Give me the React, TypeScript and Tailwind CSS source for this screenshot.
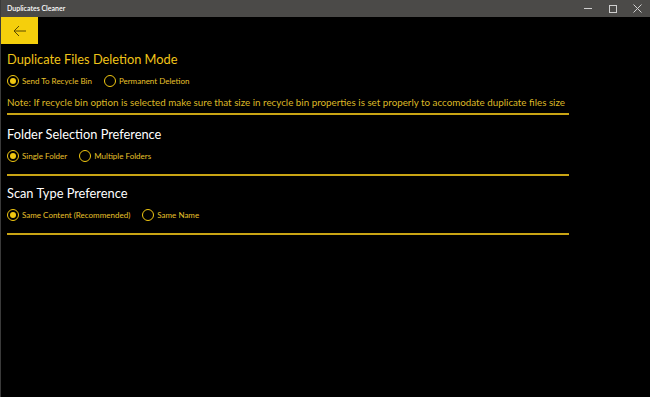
import React from "react";

const Radio = ({ label, checked }: { label: string; checked?: boolean }) => (
  <label className="flex items-center gap-[3px] mr-[12px]">
    <span className="w-[12px] h-[12px] rounded-full border-[1.5px] border-[#f2c811] flex items-center justify-center">
      {checked && <span className="w-[6px] h-[6px] rounded-full bg-[#f2c811]" />}
    </span>
    <span className="text-[8px] text-[#e8c12a]">{label}</span>
  </label>
);

const Section = ({
  title,
  titleClass,
  options,
  note,
  className,
}: {
  title: string;
  titleClass: string;
  options: { label: string; checked?: boolean }[];
  note?: string;
  className?: string;
}) => (
  <div className={`w-[562px] ${className ?? ""}`}>
    <h2 className={`text-[12.8px] leading-[20px] ${titleClass}`}>{title}</h2>
    <div className="flex mt-[5px] h-[14px]">
      {options.map((o) => (
        <Radio key={o.label} label={o.label} checked={o.checked} />
      ))}
    </div>
    {note ? (
      <>
        <p className="text-[9.8px] leading-[14px] mt-[7px] whitespace-nowrap text-[#dcb826]">{note}</p>
        <div className="h-[2px] bg-[#c9a414] mt-[4px]" />
      </>
    ) : (
      <div className="h-[2px] bg-[#c9a414] mt-[11px]" />
    )}
  </div>
);

export default function App() {
  return (
    <div
      className="w-[650px] h-[397px] bg-black overflow-hidden border-l border-[#3a3a3a]"
      style={{ fontFamily: 'Lato, "Open Sans", sans-serif' }}
    >
      <div className="h-[17px] bg-[#4b4a48] flex items-center justify-between">
        <span className="text-[7px] font-semibold text-white pl-[6px]">Duplicates Cleaner</span>
        <div className="flex items-center h-full">
          <div className="w-[25px] flex justify-center">
            <div className="w-[8px] h-px bg-[#cfcfcf]" />
          </div>
          <div className="w-[25px] flex justify-center">
            <div className="w-[8px] h-[8px] border border-[#cfcfcf]" />
          </div>
          <div className="w-[25px] flex justify-center">
            <svg width="9" height="9" viewBox="0 0 9 9" stroke="#cfcfcf" strokeWidth="1">
              <path d="M0.5 0.5 L8.5 8.5 M8.5 0.5 L0.5 8.5" />
            </svg>
          </div>
        </div>
      </div>
      <div className="w-[37px] h-[27px] bg-[#f5cf0c] flex items-center justify-center">
        <svg width="14" height="12" viewBox="0 0 14 12" fill="none" stroke="#5a4a00" strokeWidth="1">
          <path d="M13 6 H1 M6 1 L1 6 L6 11" />
        </svg>
      </div>
      <div className="pl-[6px] pt-[5px] flex flex-col">
        <Section
          title="Duplicate Files Deletion Mode"
          titleClass="text-[#f0c419]"
          options={[{ label: "Send To Recycle Bin", checked: true }, { label: "Permanent Deletion" }]}
          note="Note: If recycle bin option is selected make sure that size in recycle bin properties is set properly to accomodate duplicate files size"
        />
        <Section
          className="mt-[9px]"
          title="Folder Selection Preference"
          titleClass="text-white"
          options={[{ label: "Single Folder", checked: true }, { label: "Multiple Folders" }]}
        />
        <Section
          className="mt-[7px]"
          title="Scan Type Preference"
          titleClass="text-white"
          options={[{ label: "Same Content (Recommended)", checked: true }, { label: "Same Name" }]}
        />
      </div>
    </div>
  );
}
